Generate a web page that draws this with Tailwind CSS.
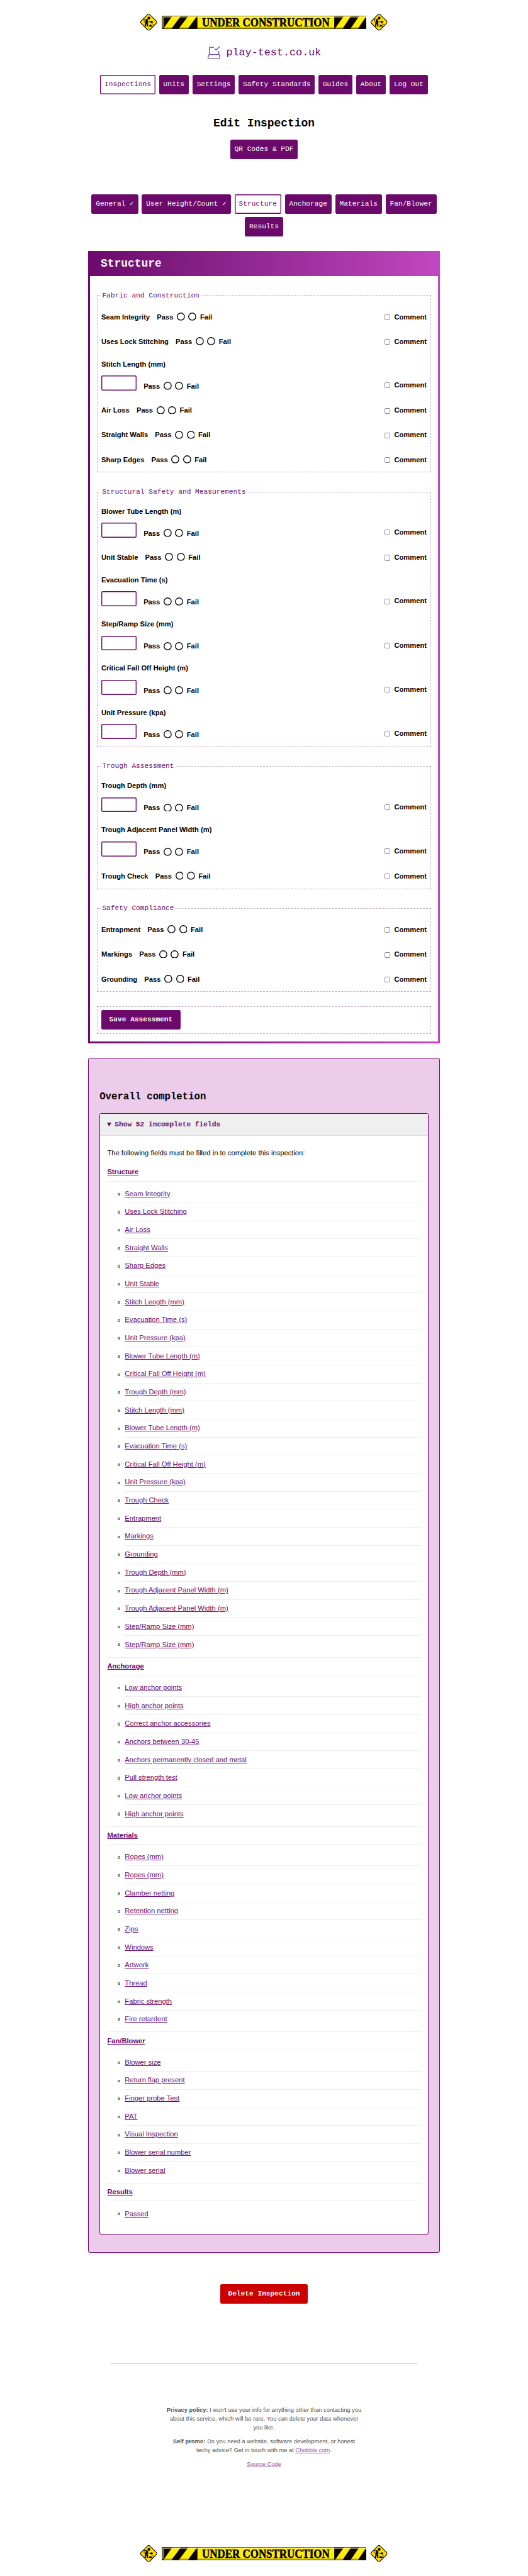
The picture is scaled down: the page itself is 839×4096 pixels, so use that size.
<!DOCTYPE html>
<html lang="en" class="text-[11.191px]">
<head>
<meta charset="utf-8">
<title>Edit Inspection</title>
<script src="https://cdn.jsdelivr.net/npm/@tailwindcss/browser@4"></script>
</head>
<body class="bg-white text-black font-['Liberation_Sans',sans-serif] text-[1rem] leading-[1.5rem] h-[366rem] overflow-x-hidden">

<svg class="hidden">
  <symbol id="worker" viewBox="0 0 38 38">
    <path d="M17 1.2Q19 -.2 21 1.2L36.8 17Q38.200 19 36.800 21L21 36.800Q19 38.200 17 36.800L1.200 21Q-.200 19 1.200 17Z" fill="#ffdd00" stroke="#000" stroke-width="1.500"/>
    <circle cx="19.300" cy="9.500" r="3.100"/>
    <path d="M13 11.500L17.500 13L16.500 20.500L17.500 23V28.500H14.500V24L13.500 22.500L12.500 28.500H9.500L11 20Z"/>
    <path d="M13 12H8.500V17L11.500 20M14 13.500L16.500 18.300H25" fill="none" stroke="#000" stroke-width="1.200"/>
    <path d="M23.500 16.300H27L29 18.300L27 20.800H24L22.500 18.500Z M18.500 29L21.500 25.500L23.500 24.300L28 29Z M26.500 22h1.500v1.500h-1.500z M28.500 24h1.300v1.300h-1.300z M26 25h1.200v1.200H26z M28.300 27h1.300v1.300h-1.300z"/>
  </symbol>
  <symbol id="banner" viewBox="0 0 466 30">
    <rect width="466" height="30" fill="#0d0500"/>
    <rect x="81" y="1" width="311" height="28" fill="#ffee00"/>
    <path d="M4 29L23.500 1H43L22 29Z M39 29L60 1H80L59.500 29Z M394 29L413.500 1H430L411 29Z M429.500 29L448.500 1H465L446 29Z" fill="#ffee00"/>
    <rect x="1" y="1" width="464" height="3" fill="#fff6a0" fill-opacity=".6"/>
    <path d="M1 1H4.500V25L1 29Z" fill="#8f8a50"/>
    <path d="M81 26H392V29H81Z M5 29L7 26H24L22 29Z M39 29L41 26H61.500L59.500 29Z M394 29L396 26H413L411 29Z M430 29L432 26H448L446 29Z" fill="#c2b000"/>
    <text x="91.500" y="24" textLength="290" lengthAdjust="spacingAndGlyphs" font-family="Liberation Serif, serif" font-weight="700" font-size="28" stroke="#000" stroke-width=".8">UNDER CONSTRUCTION</text>
  </symbol>
  <symbol id="ring" viewBox="0 0 18.4 18.4">
    <circle cx="9.200" cy="9.200" r="8.200" fill="#fff" stroke="#000" stroke-width="2"/>
  </symbol>
</svg>

<div class="flex flex-col items-center pt-8">
  <div class="flex items-center gap-2.5">
    <svg class="size-9.5"><use href="#worker"/></svg>
    <svg class="w-[29.125rem] h-7.5"><use href="#banner"/></svg>
    <svg class="size-9.5"><use href="#worker"/></svg>
  </div>

  <a class="mt-9 h-7 pl-0.5 flex items-center gap-3.5 text-[#6b0a6b] font-['Liberation_Mono',monospace] text-[1.5rem]">
    <svg class="size-7 overflow-visible" viewBox="0 0 28 28" fill="none" stroke="#6536a0" stroke-width="1.7" stroke-linecap="round" stroke-linejoin="round">
      <path d="M13.500 1.700H6Q3.800 1.700 3.700 4V16.500Q3.600 18 2.500 20L.800 24.500Q0 27.500 3 27.500H25.500Q28.500 27.500 27.700 24.500L26.500 20Q25.300 18 25.300 16.500V10.500M3.500 18H25.500M16.500 5.300L19.300 8.500Q22 4 27.500 .300"/>
    </svg>
    <span>play-test.co.uk</span>
  </a>

  <nav id="main-nav" class="mt-9 flex justify-center gap-2"></nav>

  <h1 class="mt-12.5 h-8.25 flex items-center font-['Liberation_Mono',monospace] font-bold text-[1.6rem]">Edit Inspection</h1>
  <div id="qr" class="mt-5.25 flex"></div>
  <nav id="tabs" class="mt-20 w-[50rem] flex flex-wrap justify-center gap-2"></nav>

  <form class="mt-8 w-[50rem] h-[112.64rem] flex flex-col bg-linear-to-r from-[#6b0a6b] to-[#c147c1] shadow-[0_2px_5px_rgba(0,0,0,0.08)]">
    <h2 class="h-14.5 shrink-0 flex items-center pl-7.25 text-white font-['Liberation_Mono',monospace] font-bold text-[1.6rem] pt-0.5">Structure</h2>
    <div id="fields" class="flex-1 mx-1.25 mb-1.25 bg-white px-4 pt-8 flex flex-col gap-8"></div>
  </form>

  <section class="mt-8 w-[50rem] h-[169.81rem] border-[0.125rem] border-[#6b0a6b] rounded-[0.25rem] bg-[#eccbeb] px-6.25 pt-18.75 shadow-[0_2px_5px_rgba(0,0,0,0.08)]">
    <h3 class="h-7 flex items-center font-['Liberation_Mono',monospace] font-bold text-[1.4rem]">Overall completion</h3>
    <div class="mt-5.5 h-[159.31rem] border-[0.125rem] border-[#6b0a6b] rounded-[0.25rem] bg-white">
      <div class="h-12.5 flex items-center gap-1.75 px-4 border-b border-[#dddddd] bg-[#efefef] text-[#6b0a6b] font-['Liberation_Mono',monospace] font-bold">
        <svg class="w-2.5 h-2.25" viewBox="0 0 10 9" fill="currentColor"><path d="M0 0H10L5 9Z"/></svg>
        <span>Show 52 incomplete fields</span>
      </div>
      <div class="px-4">
        <p class="mt-6.75 mb-3 h-6">The following fields must be filled in to complete this inspection:</p>
        <div id="missing"></div>
      </div>
    </div>
  </section>

  <button class="mt-18 h-11 px-4.5 rounded-[0.25rem] bg-[#cc0000] text-white font-['Liberation_Mono',monospace] font-bold">Delete Inspection</button>

  <hr class="mt-34 w-[43.75rem] border-t border-[#d3bfd8]">

  <footer class="mt-23.75 flex flex-col items-center gap-3 text-center text-[0.8333rem] leading-[1.25rem] opacity-70 whitespace-nowrap">
    <p><b>Privacy policy:</b> I won't use your info for anything other than contacting you<br>about this service, which will be rare. You can delete your data whenever<br>you like.</p>
    <p><b>Self promo:</b> Do you need a website, software development, or honest<br>techy advice? Get in touch with me at <a class="underline text-[#6b0a6b]">Chobble.com</a>.</p>
    <p><a class="underline text-[#6b0a6b]">Source Code</a></p>
  </footer>

  <div class="mt-43.25 flex items-center gap-2.5">
    <svg class="size-9.5"><use href="#worker"/></svg>
    <svg class="w-[29.125rem] h-7.5"><use href="#banner"/></svg>
    <svg class="size-9.5"><use href="#worker"/></svg>
  </div>
</div>

<script>
const link = t => `<a class="h-11 px-2.5 flex items-center rounded-[0.25rem] bg-[#6b0a6b] text-white font-['Liberation_Mono',monospace] whitespace-pre">${t}</a>`;
const current = t => `<a class="h-11 px-2.5 flex items-center rounded-[0.2rem] ring-[1.4px] ring-inset ring-[#6b0a6b] bg-white text-[#6b0a6b] font-['Liberation_Mono',monospace]">${t}</a>`;
document.getElementById('main-nav').innerHTML = current('Inspections') + ['Units', 'Settings', 'Safety Standards', 'Guides', 'About', 'Log Out'].map(link).join('');
document.getElementById('qr').innerHTML = link('QR Codes &amp; PDF');
document.getElementById('tabs').innerHTML = ['General ✓', 'User Height/Count ✓'].map(link).join('') + current('Structure') + ['Anchorage', 'Materials', 'Fan/Blower', 'Results'].map(link).join('');

const radios = `<span>Pass</span><svg class="size-[1.15rem] mb-0.5"><use href="#ring"/></svg><svg class="size-[1.15rem] mb-0.5"><use href="#ring"/></svg><span>Fail</span>`;
const comment = `<span class="ml-auto flex items-center gap-2.25 h-11"><span class="size-3.25 mt-0.25 rounded-[0.18rem] border border-[#8a8a8a] bg-white"></span>Comment</span>`;
const row = t => `<div class="h-14 pt-0.5 flex items-center gap-2 font-bold"><span class="mr-2">${t}</span>${radios}${comment}</div>`;
const measured = t => `<div class="h-[6.275rem] pt-3 font-bold"><div class="h-6">${t}</div><div class="mt-3.5 flex items-start"><span class="w-20 h-8.5 mr-4 rounded-[0.2rem] ring-[1.4px] ring-inset ring-[#6b0a6b]"></span><span class="h-12.25 flex items-center gap-2">${radios}</span>${comment}</div></div>`;
const groups = [
  ['Fabric and Construction', 'h-[25.9rem]', ['Seam Integrity', 'Uses Lock Stitching', 'Stitch Length (mm)', 'Air Loss', 'Straight Walls', 'Sharp Edges']],
  ['Structural Safety and Measurements', 'h-[37rem]', ['Blower Tube Length (m)', 'Unit Stable', 'Evacuation Time (s)', 'Step/Ramp Size (mm)', 'Critical Fall Off Height (m)', 'Unit Pressure (kpa)']],
  ['Trough Assessment', 'h-[18.175rem]', ['Trough Depth (mm)', 'Trough Adjacent Panel Width (m)', 'Trough Check']],
  ['Safety Compliance', 'h-[12.625rem]', ['Entrapment', 'Markings', 'Grounding']],
];
document.getElementById('fields').innerHTML = groups.map(([name, height, items]) =>
  `<fieldset class="${height} border-[0.125rem] border-dashed border-[#ccabcc] px-2 pt-2"><legend class="-ml-0.5 px-1 h-6 text-[#6b0a6b] font-['Liberation_Mono',monospace]">${name}</legend>${items.map(t => t.endsWith(')') ? measured(t) : row(t)).join('')}</fieldset>`
).join('') + `<fieldset class="h-16 border-[0.125rem] border-dashed border-[#ccabcc] px-2 pt-2"><button type="button" class="block h-11 px-4.5 rounded-[0.25rem] bg-[#6b0a6b] text-white font-['Liberation_Mono',monospace] font-bold">Save Assessment</button></fieldset>`;

const missing = {
  'Structure': ['Seam Integrity', 'Uses Lock Stitching', 'Air Loss', 'Straight Walls', 'Sharp Edges', 'Unit Stable', 'Stitch Length (mm)', 'Evacuation Time (s)', 'Unit Pressure (kpa)', 'Blower Tube Length (m)', 'Critical Fall Off Height (m)', 'Trough Depth (mm)', 'Stitch Length (mm)', 'Blower Tube Length (m)', 'Evacuation Time (s)', 'Critical Fall Off Height (m)', 'Unit Pressure (kpa)', 'Trough Check', 'Entrapment', 'Markings', 'Grounding', 'Trough Depth (mm)', 'Trough Adjacent Panel Width (m)', 'Trough Adjacent Panel Width (m)', 'Step/Ramp Size (mm)', 'Step/Ramp Size (mm)'],
  'Anchorage': ['Low anchor points', 'High anchor points', 'Correct anchor accessories', 'Anchors between 30-45', 'Anchors permanently closed and metal', 'Pull strength test', 'Low anchor points', 'High anchor points'],
  'Materials': ['Ropes (mm)', 'Ropes (mm)', 'Clamber netting', 'Retention netting', 'Zips', 'Windows', 'Artwork', 'Thread', 'Fabric strength', 'Fire retardent'],
  'Fan/Blower': ['Blower size', 'Return flap present', 'Finger probe Test', 'PAT', 'Visual Inspection', 'Blower serial number', 'Blower serial'],
  'Results': ['Passed'],
};
document.getElementById('missing').innerHTML = Object.entries(missing).map(([name, items], i) =>
  `<div class="${i ? 'mt-2 h-10.5 border-y' : 'h-10.25 border-b'} flex items-center border-[#eeeeee] text-[#6b0a6b] font-bold"><a class="underline">${name}</a></div>
  <ul class="pt-2">${items.map((t, k) => `<li class="flex items-center">
    <span class="w-10 shrink-0 pl-6"><span class="block size-1.5 mt-0.25 rounded-full border border-[#333333]"></span></span>
    <span class="flex-1 flex items-center ${k < items.length - 1 ? 'h-10.25 border-b' : 'h-10'} border-[#eeeeee] text-[#6b0a6b]"><a class="underline">${t}</a></span></li>`).join('')}</ul>`
).join('');
</script>
</body>
</html>
